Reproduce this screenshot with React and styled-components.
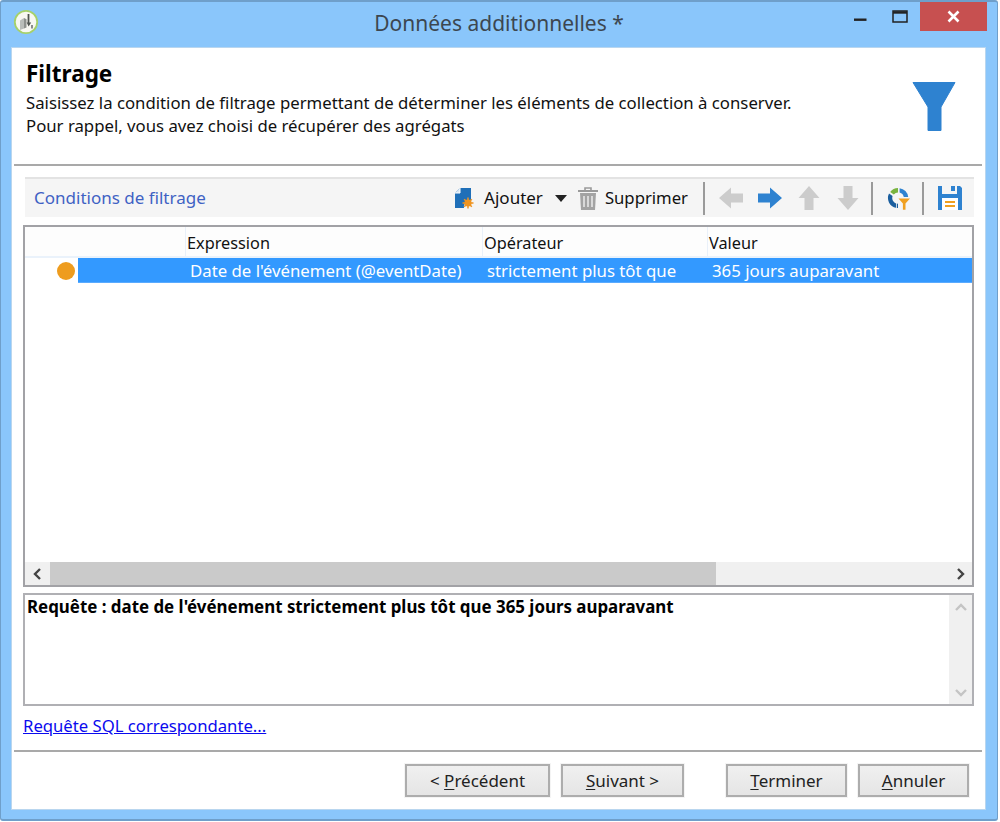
import React from "react";
import styled, { createGlobalStyle } from "styled-components";

const Global = createGlobalStyle`
  html, body { margin: 0; padding: 0; background: #fff; }
  * { box-sizing: border-box; }
  body { font-family: "Noto Sans", "Open Sans", "Liberation Sans", sans-serif; color: #111; }
`;

const Frame = styled.div`
  width: 998px; height: 821px; display: flex; flex-direction: column;
  background: #8ac6fb; border: 1px solid #6f9fca; border-top-width: 2px; border-bottom-width: 2px;
  border-radius: 3px; padding: 0 11px 9px 10px;
`;
const TitleBar = styled.div`
  height: 45px; flex: none; display: flex; align-items: flex-start; margin: 0 -1px 0 -1px;
`;
const AppLogo = styled.svg`
  width: 26px; height: 26px; margin: 7px 0 0 3px; flex: none;
`;
const Title = styled.div`
  flex: 1; text-align: center; font-size: 21px; line-height: 28px; padding-top: 7px; color: #3c4650; margin-left: 112px;
`;
const WinButton = styled.div`
  width: ${p => p.$w}px; height: 29px; flex: none; display: flex; align-items: center; justify-content: center;
  background: ${p => p.$bg || "transparent"}; margin-left: ${p => p.$ml || 0}px;
`;
const Client = styled.div`
  flex: 1; min-height: 0; background: #fff; border: 1px solid #b9d6ef; display: flex; flex-direction: column; padding: 0 3px 0 2px;
`;
const Head = styled.header`
  height: 116px; flex: none; display: flex; justify-content: space-between; padding: 11px 26px 0 12px;
`;
const HeadText = styled.div`display: flex; flex-direction: column;`;
const H1 = styled.h1`
  margin: 0; font-size: 22.5px; line-height: 30px; font-weight: 700; color: #000;
`;
const Lead = styled.p`
  margin: 2px 0 0; font-size: 16.75px; line-height: 23px; color: #111; white-space: nowrap;
`;
const FunnelIcon = styled.svg`width: 44px; height: 50px; margin-top: 22px; flex: none;`;
const Rule = styled.hr`
  margin: 0; border: 0; height: 2px; background: #a9a9a9; flex: none;
`;
const Body = styled.main`
  flex: none; display: flex; flex-direction: column; padding: 11px 8px 0 9px;
`;
const Toolbar = styled.div`
  height: 40px; flex: none; margin: 0 0 0 2px; background: #f5f5f5; border-top: 2px solid #e3e3e3;
  display: flex; align-items: center; padding: 0 11px 0 9px;
`;
const SectionName = styled.div`
  font-size: 17px; color: #3f62c4; margin-right: auto; padding-bottom: 2px;
`;
const Tool = styled.div`
  display: flex; align-items: center; flex: none; margin-left: ${p => p.$ml || 0}px;
`;
const ToolLabel = styled.span`
  flex: none; font-size: ${p => p.$size || 17}px; color: #111; padding-bottom: 2px; margin-left: ${p => p.$ml || 0}px;
`;
const ToolSep = styled.span`
  width: 2px; height: 33px; background: #9a9a9a; flex: none; margin-left: ${p => p.$ml}px;
`;
const Table = styled.section`
  height: 362px; flex: none; margin-top: 8px; border: 2px solid #a2a2a6; display: flex; flex-direction: column; background: #fff;
`;
const HeaderRow = styled.div`
  height: 29px; flex: none; display: grid; grid-template-columns: 160px 297px 225px 1fr; font-size: 16.3px; line-height: 32px;
  color: #111; background: #fdfdfd;
`;
const HeaderCell = styled.div`
  padding-left: 1px; border-left: ${p => p.$first ? "none" : "1px solid #e9f0f9"};
`;
const Rows = styled.div`
  flex: 1; min-height: 0; border-top: 2px solid #eaf2fb;
`;
const Row = styled.div`
  height: 25px; display: flex; align-items: center;
`;
const Status = styled.span`
  width: 18px; height: 18px; border-radius: 50%; background: #ee9c1e; margin-left: 32px; flex: none;
`;
const Selected = styled.div`
  flex: 1; height: 25px; margin-left: 3px; background: #3399ff; color: #fff; font-size: 16.8px; line-height: 25px;
  display: grid; grid-template-columns: 297px 225px 1fr; padding-left: 112px; border-bottom: 1px solid #5aabff;
  & > span { white-space: nowrap; }
`;
const HScroll = styled.div`
  height: 23px; flex: none; display: flex; background: #f0f0f0;
`;
const ScrollBtn = styled.div`
  width: ${p => p.$w}px; flex: none; display: flex; align-items: center; justify-content: center;
`;
const Thumb = styled.div`width: 666px; background: #cacaca; flex: none;`;
const Grow = styled.div`flex: 1;`;
const Query = styled.section`
  height: 113px; flex: none; margin-top: 6px; border: 2px solid #b0b0b4; display: flex; background: #fff;
`;
const QueryText = styled.div`
  flex: 1; font-size: 16.9px; font-weight: 700; color: #000; padding: 0 0 0 2px; line-height: 23px; white-space: nowrap;
`;
const VScroll = styled.div`
  width: 23px; flex: none; background: #f0f0f0; display: flex; flex-direction: column; justify-content: space-between; align-items: center; padding: 7px 0 6px;
`;
const SqlLink = styled.a`
  margin-top: 8px; font-size: 16.7px; line-height: 24px; color: #0a0aee; text-decoration: underline; align-self: flex-start; height: 24px;
`;
const Spacer = styled.div`height: 12px; flex: none;`;
const Footer = styled.footer`
  flex: none; display: flex; padding: 12px 13px 0 391px;
`;
const Button = styled.button`
  width: ${p => p.$w}px; height: 33px; margin-left: ${p => p.$ml || 0}px; flex: none;
  border: 2px solid #adadad; background: linear-gradient(#f0f0f0, #e5e5e5); font: inherit; font-size: 17px; color: #222; padding: 0;
  outline: 1px solid #f4f4f4;
  & u { text-underline-offset: 2px; }
`;

const Logo = () => (
  <AppLogo viewBox="0 0 26 26">
    <circle cx="13" cy="13" r="11.2" fill="#f8f8f2" stroke="#a6d16a" strokeWidth="1.8" />
    <path d="M7 11.5l4-2.5v10.5l-4 1.5z" fill="#b9bdb9" />
    <path d="M11 9l2.5 1.2v8.3L11 19.5z" fill="#8d918d" />
    <path d="M14.6 5h1.8v8.5h1.8l-2.6 4-1.9-4h.9z" fill="#4f544f" />
    <path d="M18 16h2v3.4h-2z" fill="#8c8c8c" />
  </AppLogo>
);

const AddIcon = () => (
  <svg width="20" height="24" viewBox="0 0 20 24">
    <path d="M1 7l5-5h11v13a6 6 0 0 0-7 7H1z" fill="#1f6fb8" />
    <path d="M1 7h5V2z" fill="#d6e4f1" />
    <path d="M6 2v5H1" fill="none" stroke="#fff" strokeWidth="1" />
    <circle cx="14" cy="17" r="3.6" fill="#ef9420" />
    <path d="M14 11.5v11M8.5 17h11M10.2 13.2l7.6 7.6M17.8 13.2l-7.6 7.6" stroke="#ef9420" strokeWidth="1.5" />
  </svg>
);
const TrashIcon = () => (
  <svg width="22" height="25" viewBox="0 0 22 25">
    <path d="M1 5h20" stroke="#9a9a9a" strokeWidth="2" />
    <path d="M8 5V2h6v3" fill="none" stroke="#9a9a9a" strokeWidth="1.6" />
    <path d="M3 7h16l-1 17H4z" fill="#a3a3a3" />
    <path d="M7 10v11M11 10v11M15 10v11" stroke="#e6e6e6" strokeWidth="1.6" />
  </svg>
);
const Caret = () => (
  <svg width="12" height="7" viewBox="0 0 12 7"><path d="M0 0h12L6 7z" fill="#222" /></svg>
);
const Arrow = ({ rot = 0, color }) => (
  <svg width="26" height="26" viewBox="0 0 26 26" style={{ display: "block" }}>
    <path transform={`rotate(${rot} 13 13)`} d="M1 13L13 2.5V8.5H25V17.5H13V23.5z" fill={color} />
  </svg>
);
const ChartIcon = () => (
  <svg width="26" height="26" viewBox="0 0 26 26">
    <path d="M5.2 7A10 10 0 0 1 13 3v4.4a5.8 5.8 0 0 0-4.2 2z" fill="#79b33f" />
    <path d="M14.6 3.2a10 10 0 0 1 8.6 8.8h-4.4a5.8 5.8 0 0 0-4.2-4.5z" fill="#2e82d0" />
    <path d="M4 8.5A10 10 0 0 0 11 22.8v-4.4A5.8 5.8 0 0 1 7.6 11z" fill="#1b5f9f" />
    <path d="M13 18.8l0 4.2-1.2-.1v-4.3z" fill="#1b5f9f" />
    <path d="M13.5 13.5H25l-4.5 5v6.2h-2.6v-6.2z" fill="#f0a020" />
  </svg>
);
const SaveIcon = () => (
  <svg width="26" height="26" viewBox="0 0 26 26">
    <path d="M1 1h4v8h15V1h3l2 2v22H1z" fill="#2e82d0" />
    <path d="M14 1h4v5h-4z" fill="#2e82d0" />
    <path d="M5 13h16v12H5z" fill="#fff" />
    <path d="M8 16h10v2H8zM8 20h10v2H8z" fill="#f0a020" />
  </svg>
);
const Chevron = ({ dir, color = "#444", w = 2.4 }) => {
  const d = { left: "M8 1L3 6l5 5", right: "M4 1l5 5-5 5", up: "M1 8l5-5 5 5", down: "M1 4l5 5 5-5" }[dir];
  return <svg width="12" height="12" viewBox="0 0 12 12"><path d={d} fill="none" stroke={color} strokeWidth={w} /></svg>;
};

export default function App() {
  return (
    <>
      <Global />
      <Frame>
        <TitleBar>
          <Logo />
          <Title>Données additionnelles *</Title>
          <WinButton $w={26}>
            <svg width="13" height="13" viewBox="0 0 13 13"><path d="M0 8.5h12.5v2.4H0z" fill="#222" /></svg>
          </WinButton>
          <WinButton $w={30} $ml={12}>
            <svg width="16" height="13" viewBox="0 0 16 13"><path d="M1 1h14v11H1z" fill="none" stroke="#222" strokeWidth="1.5" /><path d="M1 2.5h14" stroke="#222" strokeWidth="2.4" /></svg>
          </WinButton>
          <WinButton $w={67} $bg="#c75050" $ml={5}>
            <svg width="13" height="13" viewBox="0 0 13 13"><path d="M1.5 1.5l10 10M11.5 1.5l-10 10" stroke="#fff" strokeWidth="2.6" /></svg>
          </WinButton>
        </TitleBar>
        <Client>
          <Head>
            <HeadText>
              <H1>Filtrage</H1>
              <Lead>
                Saisissez la condition de filtrage permettant de déterminer les éléments de collection à conserver.<br />
                Pour rappel, vous avez choisi de récupérer des agrégats
              </Lead>
            </HeadText>
            <FunnelIcon viewBox="0 0 44 50">
              <path d="M1 1.5h42L29 26v23.5H16V26z" fill="#2e82d0" stroke="#2e82d0" strokeLinejoin="round" />
            </FunnelIcon>
          </Head>
          <Rule />
          <Body>
            <Toolbar>
              <SectionName>Conditions de filtrage</SectionName>
              <Tool><AddIcon /></Tool>
              <ToolLabel $ml={10}>Ajouter</ToolLabel>
              <Tool $ml={12}><Caret /></Tool>
              <Tool $ml={10}><TrashIcon /></Tool>
              <ToolLabel $ml={6} $size={16.7}>Supprimer</ToolLabel>
              <ToolSep $ml={15} />
              <Tool $ml={13}><Arrow color="#cccccc" /></Tool>
              <Tool $ml={13}><Arrow rot={180} color="#2e82d0" /></Tool>
              <Tool $ml={13}><Arrow rot={90} color="#cccccc" /></Tool>
              <Tool $ml={13}><Arrow rot={270} color="#cccccc" /></Tool>
              <ToolSep $ml={10} />
              <Tool $ml={12}><ChartIcon /></Tool>
              <ToolSep $ml={11} />
              <Tool $ml={13}><SaveIcon /></Tool>
            </Toolbar>
            <Table>
              <HeaderRow>
                <HeaderCell $first />
                <HeaderCell>Expression</HeaderCell>
                <HeaderCell>Opérateur</HeaderCell>
                <HeaderCell>Valeur</HeaderCell>
              </HeaderRow>
              <Rows>
                <Row>
                  <Status />
                  <Selected>
                    <span>Date de l'événement (@eventDate)</span>
                    <span>strictement plus tôt que</span>
                    <span>365 jours auparavant</span>
                  </Selected>
                </Row>
              </Rows>
              <HScroll>
                <ScrollBtn $w={25}><Chevron dir="left" /></ScrollBtn>
                <Thumb />
                <Grow />
                <ScrollBtn $w={24}><Chevron dir="right" /></ScrollBtn>
              </HScroll>
            </Table>
            <Query>
              <QueryText>Requête : date de l'événement strictement plus tôt que 365 jours auparavant</QueryText>
              <VScroll>
                <Chevron dir="up" color="#c4c4c4" />
                <Chevron dir="down" color="#c4c4c4" />
              </VScroll>
            </Query>
            <SqlLink href="#">Requête SQL correspondante...</SqlLink>
            <Spacer />
          </Body>
          <Rule />
          <Footer>
            <Button $w={145}>&lt; <u>P</u>récédent</Button>
            <Button $w={123} $ml={11}><u>S</u>uivant &gt;</Button>
            <Button $w={121} $ml={42}><u>T</u>erminer</Button>
            <Button $w={111} $ml={11}><u>A</u>nnuler</Button>
          </Footer>
        </Client>
      </Frame>
    </>
  );
}
